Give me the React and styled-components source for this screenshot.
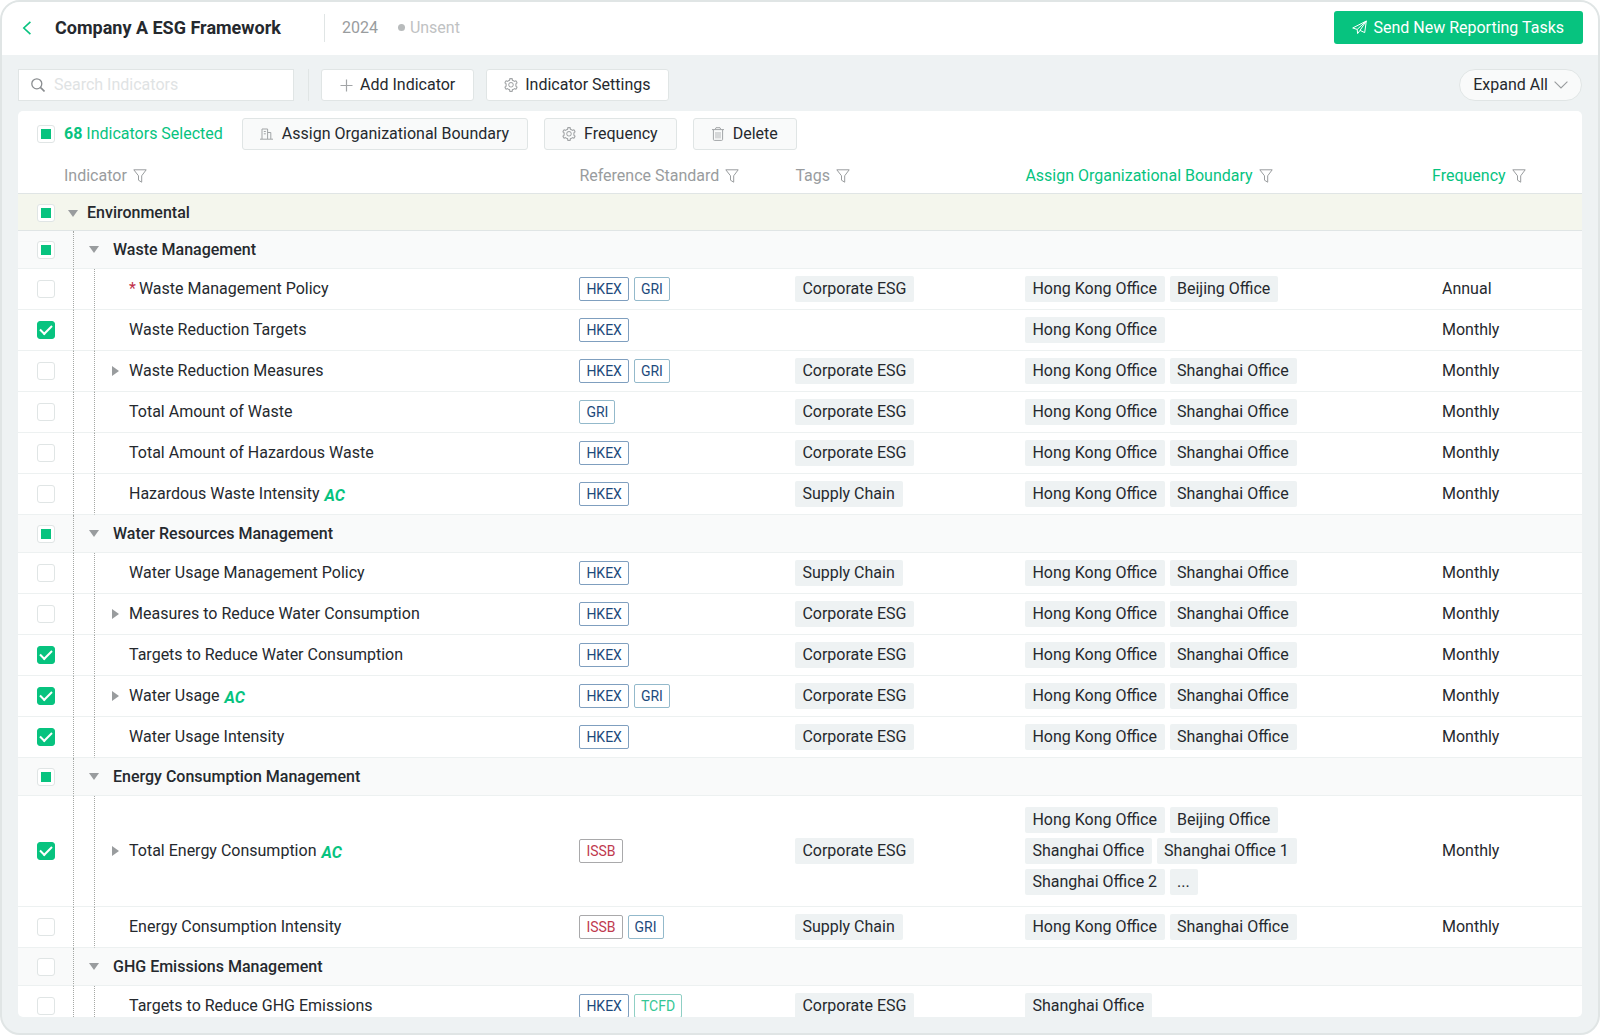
import React, { useEffect, useRef, useState } from "react";
import styled, { createGlobalStyle, css } from "styled-components";
import { AiOutlineSetting } from "react-icons/ai";

const GlobalStyle = createGlobalStyle`
  * {
    box-sizing: border-box;
  }
  body {
    margin: 0;
    background-color: #ffffff;
    color: #25292e;
    font-family: Roboto, "Liberation Sans", sans-serif;
    font-size: 16px;
    line-height: 20px;
  }
  button,
  input {
    font: inherit;
    color: inherit;
  }
`;

const Page = styled.div`
  height: 100vh;
  display: flex;
  flex-direction: column;
  overflow: hidden;
  background-color: #eef2f3;
  border: 2px solid #e0e5e5;
  border-radius: 20px;
`;

const Header = styled.header`
  display: flex;
  align-items: center;
  height: 53px;
  padding: 0 15px 2px 19px;
  background-color: #ffffff;
`;

const BackLink = styled.a`
  display: flex;
  width: 34px;
  color: #07c37f;
`;

const Title = styled.h1`
  margin: 0;
  font-size: 18px;
  font-weight: 700;
  line-height: 24px;
`;

const HeaderDivider = styled.div`
  width: 1px;
  height: 28px;
  margin: 0 17px 0 43px;
  background-color: #e0e5e5;
`;

const Year = styled.span`
  color: #999c9e;
`;

const Status = styled.span`
  display: flex;
  align-items: center;
  gap: 5px;
  margin-left: 20px;
  color: #bfc2c3;
  &::before {
    content: "";
    width: 7px;
    height: 7px;
    border-radius: 50%;
    background-color: #b8bbbc;
  }
`;

const SendButton = styled.button`
  display: flex;
  align-items: center;
  gap: 6px;
  height: 33px;
  margin-left: auto;
  padding: 0 19px 0 18px;
  border: none;
  border-radius: 3px;
  background-color: #07c37f;
  color: #ffffff;
  cursor: pointer;
`;

const Main = styled.main`
  flex: 1;
  min-height: 0;
  display: flex;
  flex-direction: column;
  padding: 14px 16px 16px;
`;

const Toolbar = styled.div`
  display: flex;
  align-items: center;
  margin-bottom: 10px;
`;

const SearchBox = styled.label`
  display: flex;
  align-items: center;
  gap: 9px;
  width: 276px;
  height: 32px;
  padding: 0 12px;
  border: 1px solid #e0e5e5;
  background-color: #ffffff;
  color: #8a8d90;
`;

const SearchInput = styled.input`
  flex: 1;
  min-width: 0;
  padding: 0;
  border: none;
  outline: none;
  background: transparent;
  color: #25292e;
  &::placeholder {
    color: #dfe3e4;
    opacity: 1;
  }
`;

const ToolbarDivider = styled.div`
  width: 1px;
  height: 32px;
  margin: 0 12px 0 14px;
  background-color: #e0e5e5;
`;

const Button = styled.button`
  display: flex;
  align-items: center;
  gap: ${(props) => (props.$soft ? "7px" : "6px")};
  height: 32px;
  margin-right: ${(props) => (props.$soft ? "16px" : "12px")};
  padding: 0 18px 0 16px;
  border: 1px solid #e0e5e5;
  border-radius: 3px;
  background-color: ${(props) => (props.$soft ? "#f9fafa" : "#ffffff")};
  white-space: nowrap;
  cursor: pointer;
`;

const ButtonIcon = styled.span`
  display: flex;
  justify-content: center;
  width: 16px;
  color: #a2a5a7;
`;

const ExpandButton = styled(Button)`
  margin: 0 0 0 auto;
  padding: 0 13px;
  border-radius: 16px;
  background-color: #f9fafa;
  svg {
    color: #999c9e;
  }
`;

const Panel = styled.section`
  flex: 1;
  min-height: 0;
  overflow: auto;
  scrollbar-width: none;
  border-radius: 5px;
  background-color: #ffffff;
`;

const SelectionBar = styled.div`
  display: flex;
  align-items: center;
  height: 46px;
  padding-left: 19px;
`;

const SelectedCount = styled.label`
  margin: 0 19px 0 9px;
  color: #07c37f;
`;

const Checkbox = styled.input`
  flex: none;
  display: grid;
  place-content: center;
  appearance: none;
  width: 18px;
  height: 18px;
  margin: 0;
  border: 1px solid #e0e5e5;
  border-radius: 3px;
  background-color: #ffffff;
  cursor: pointer;
  &:indeterminate::after {
    content: "";
    width: 10px;
    height: 10px;
    background-color: #07c37f;
  }
  &:checked {
    border-color: #07c37f;
    background-color: #07c37f;
  }
  &:checked::after {
    content: "";
    width: 10px;
    height: 5px;
    margin-bottom: 3px;
    border: solid #ffffff;
    border-width: 0 0 2px 2px;
    transform: rotate(-45deg);
  }
`;

const Table = styled.table`
  width: 100%;
  min-width: 1200px;
  table-layout: fixed;
  border-collapse: separate;
  border-spacing: 0;
`;

const HeadCell = styled.th`
  height: 37px;
  padding: 2px 0 0 ${(props) => props.$indent || 0}px;
  border-bottom: 1px solid #e0e5e5;
  color: ${(props) => (props.$active ? "#07c37f" : "#999c9e")};
  font-weight: 400;
  text-align: left;
`;

const HeadLabel = styled.div`
  display: flex;
  align-items: center;
  gap: 6px;
`;

const FilterButton = styled.button`
  display: flex;
  padding: 0;
  border: none;
  background: none;
  color: #999c9e;
  cursor: pointer;
`;

const SectionCell = styled.th`
  height: 37px;
  padding: 2px 0 0 19px;
  border-bottom: 1px solid #e0e5e5;
  background-color: #f4f6ed;
  font-weight: 500;
  text-align: left;
`;

const SectionContent = styled.div`
  display: flex;
  align-items: center;
`;

const cell = css`
  padding: 0;
  border-bottom: 1px solid #edf1f1;
  text-align: left;
`;

const Cell = styled.td`
  ${cell}
  height: 41px;
  padding-left: ${(props) => props.$indent || 0}px;
`;

const CheckCell = styled(Cell)`
  padding-left: 19px;
`;

const GuideCell = styled(Cell)`
  border-left: 1px dotted #a5a8a5;
`;

const GroupRow = styled.tr`
  background-color: #f9fafa;
  ${Cell} {
    height: 38px;
  }
`;

const GroupCell = styled.th`
  ${cell}
  height: 38px;
  padding-left: 15px;
  border-left: 1px dotted #a5a8a5;
  font-weight: 500;
`;

const Toggle = styled.button`
  display: flex;
  justify-content: center;
  flex: none;
  width: 10px;
  margin: 0 ${(props) => props.$gap}px 0 ${(props) => props.$before || 0}px;
  padding: 0;
  border: none;
  background: none;
  color: #999c9e;
  cursor: pointer;
`;

const NameContent = styled.div`
  display: flex;
  align-items: center;
  padding-left: ${(props) => (props.$expandable ? 15 : 34)}px;
`;

const Required = styled.span`
  margin-right: 3px;
  color: #c0304a;
`;

const AutoMark = styled.span`
  margin-left: 5px;
  padding-top: 4px;
  color: #07c37f;
  font-size: 16px;
  font-style: italic;
  font-weight: 700;
`;

const TagList = styled.div`
  display: flex;
  flex-wrap: wrap;
  gap: 5px;
  max-width: 280px;
  padding: ${(props) => (props.$tall ? "11px" : "0")} 0;
`;

const Tag = styled.span`
  height: 26px;
  padding: 0 8px 0 7px;
  border-radius: 2px;
  background-color: #eef2f3;
  line-height: 26px;
`;

const standardColors = {
  HKEX: { text: "#1d4a7c", border: "#7f9fbf" },
  GRI: { text: "#1d4a7c", border: "#93b9cb" },
  ISSB: { text: "#c03a4e", border: "#a9a9ab" },
  TCFD: { text: "#35c796", border: "#8fcfc4" },
};

const Standard = styled.span`
  height: 24px;
  padding: 0 6px;
  border: 1px solid ${(props) => standardColors[props.$name].border};
  border-radius: 2px;
  color: ${(props) => standardColors[props.$name].text};
  font-size: 14px;
  line-height: 22px;
`;

const FilterIcon = () => (
  <svg width="14" height="14" viewBox="0 0 14 14" fill="none" stroke="currentColor">
    <path d="M0.8 0.8H13.2L8.7 6.8V13.2L5.5 11.2V6.8Z" strokeLinejoin="round" />
  </svg>
);

const BackIcon = () => (
  <svg width="12" height="14" viewBox="0 0 12 14" fill="none" stroke="currentColor" strokeWidth="1.6">
    <path d="M9.4 0.8L2.8 7L9.4 13.2" />
  </svg>
);

const SearchIcon = () => (
  <svg width="14" height="14" viewBox="0 0 14 14" fill="none" stroke="currentColor" strokeWidth="1.3">
    <circle cx="5.8" cy="5.8" r="5" />
    <path d="M9.4 9.4L13.5 13.5" strokeWidth="1.6" />
  </svg>
);

const PlusIcon = () => (
  <svg width="13" height="13" viewBox="0 0 13 13" fill="none" stroke="currentColor" strokeWidth="1.2">
    <path d="M6.5 0.5V12.5M0.5 6.5H12.5" />
  </svg>
);

const SendIcon = () => (
  <svg width="15" height="15" viewBox="0 0 15 15" fill="none" stroke="currentColor" strokeLinejoin="round">
    <path d="M0.7 8L14.3 1L12.7 12.6L8 10.4L5.6 13.6L5.2 9.4Z" />
    <path d="M5.2 9.4L14.3 1L8 10.4" />
  </svg>
);

const BuildingIcon = () => (
  <svg width="13" height="12" viewBox="0 0 13 12" fill="none" stroke="currentColor">
    <path d="M0 11.2H13M2 11V1H7.6V11M7.6 4.5H10.8V11" />
    <path d="M3.8 3.5H5.8M3.8 5.8H5.8" />
  </svg>
);

const TrashIcon = () => (
  <svg width="12" height="14" viewBox="0 0 12 14" fill="none" stroke="currentColor">
    <path d="M0 2.6H12M3.2 2.4L4 0.7H8L8.8 2.4M1.4 2.8V12.4Q1.4 13.4 2.4 13.4H9.6Q10.6 13.4 10.6 12.4V2.8" />
    <path d="M4 5V11.4M6 5V11.4M8 5V11.4" strokeWidth="0.8" />
  </svg>
);

const ChevronIcon = () => (
  <svg width="14" height="8" viewBox="0 0 14 8" fill="none" stroke="currentColor" strokeWidth="1.1">
    <path d="M0.6 0.6L7 7L13.4 0.6" />
  </svg>
);

const DownIcon = () => (
  <svg width="10" height="7" viewBox="0 0 10 7" fill="currentColor">
    <path d="M0 0H10L5 7Z" />
  </svg>
);

const RightIcon = () => (
  <svg width="7" height="10" viewBox="0 0 7 10" fill="currentColor">
    <path d="M0 0L7 5L0 10Z" />
  </svg>
);

const HK = "Hong Kong Office";
const SH = "Shanghai Office";
const BJ = "Beijing Office";

const groups = [
  {
    name: "Waste Management",
    state: "some",
    rows: [
      { name: "Waste Management Policy", required: true, standards: ["HKEX", "GRI"], tag: "Corporate ESG", offices: [HK, BJ], frequency: "Annual" },
      { name: "Waste Reduction Targets", checked: true, standards: ["HKEX"], offices: [HK], frequency: "Monthly" },
      { name: "Waste Reduction Measures", expandable: true, standards: ["HKEX", "GRI"], tag: "Corporate ESG", offices: [HK, SH], frequency: "Monthly" },
      { name: "Total Amount of Waste", standards: ["GRI"], tag: "Corporate ESG", offices: [HK, SH], frequency: "Monthly" },
      { name: "Total Amount of Hazardous Waste", standards: ["HKEX"], tag: "Corporate ESG", offices: [HK, SH], frequency: "Monthly" },
      { name: "Hazardous Waste Intensity", auto: true, standards: ["HKEX"], tag: "Supply Chain", offices: [HK, SH], frequency: "Monthly" },
    ],
  },
  {
    name: "Water Resources Management",
    state: "some",
    rows: [
      { name: "Water Usage Management Policy", standards: ["HKEX"], tag: "Supply Chain", offices: [HK, SH], frequency: "Monthly" },
      { name: "Measures to Reduce Water Consumption", expandable: true, standards: ["HKEX"], tag: "Corporate ESG", offices: [HK, SH], frequency: "Monthly" },
      { name: "Targets to Reduce Water Consumption", checked: true, standards: ["HKEX"], tag: "Corporate ESG", offices: [HK, SH], frequency: "Monthly" },
      { name: "Water Usage", auto: true, expandable: true, checked: true, standards: ["HKEX", "GRI"], tag: "Corporate ESG", offices: [HK, SH], frequency: "Monthly" },
      { name: "Water Usage Intensity", checked: true, standards: ["HKEX"], tag: "Corporate ESG", offices: [HK, SH], frequency: "Monthly" },
    ],
  },
  {
    name: "Energy Consumption Management",
    state: "some",
    rows: [
      { name: "Total Energy Consumption", auto: true, expandable: true, checked: true, standards: ["ISSB"], tag: "Corporate ESG", offices: [HK, BJ, SH, "Shanghai Office 1", "Shanghai Office 2", "..."], frequency: "Monthly" },
      { name: "Energy Consumption Intensity", standards: ["ISSB", "GRI"], tag: "Supply Chain", offices: [HK, SH], frequency: "Monthly" },
    ],
  },
  {
    name: "GHG Emissions Management",
    state: "none",
    rows: [
      { name: "Targets to Reduce GHG Emissions", standards: ["HKEX", "TCFD"], tag: "Corporate ESG", offices: [SH], frequency: "" },
    ],
  },
];

const Check = ({ state, ...rest }) => {
  const ref = useRef(null);
  const [checked, setChecked] = useState(state === "all");

  useEffect(() => {
    ref.current.indeterminate = state === "some";
  }, [state]);

  return (
    <Checkbox
      ref={ref}
      type="checkbox"
      checked={checked}
      onChange={(e) => setChecked(e.target.checked)}
      {...rest}
    />
  );
};

const ColumnHead = ({ label, ...rest }) => (
  <HeadCell scope="col" {...rest}>
    <HeadLabel>
      {label}
      <FilterButton type="button" aria-label={`Filter ${label}`}>
        <FilterIcon />
      </FilterButton>
    </HeadLabel>
  </HeadCell>
);

const IndicatorRow = ({ row }) => (
  <tr>
    <CheckCell>
      <Check state={row.checked ? "all" : "none"} aria-label={row.name} />
    </CheckCell>
    <GuideCell />
    <GuideCell>
      <NameContent $expandable={row.expandable}>
        {row.expandable && (
          <Toggle type="button" $gap={9} aria-label={`Expand ${row.name}`}>
            <RightIcon />
          </Toggle>
        )}
        {row.required && <Required>*</Required>}
        {row.name}
        {row.auto && <AutoMark>AC</AutoMark>}
      </NameContent>
    </GuideCell>
    <Cell>
      <TagList>
        {row.standards.map((name) => (
          <Standard key={name} $name={name}>
            {name}
          </Standard>
        ))}
      </TagList>
    </Cell>
    <Cell>
      <TagList>{row.tag && <Tag>{row.tag}</Tag>}</TagList>
    </Cell>
    <Cell>
      <TagList $tall={row.offices.length > 2}>
        {row.offices.map((office) => (
          <Tag key={office}>{office}</Tag>
        ))}
      </TagList>
    </Cell>
    <Cell $indent={10}>{row.frequency}</Cell>
  </tr>
);

const App = () => {
  return (
    <>
      <GlobalStyle />
      <Page>
        <Header>
          <BackLink href="#" aria-label="Back">
            <BackIcon />
          </BackLink>
          <Title>Company A ESG Framework</Title>
          <HeaderDivider />
          <Year>2024</Year>
          <Status>Unsent</Status>
          <SendButton type="button">
            <SendIcon />
            Send New Reporting Tasks
          </SendButton>
        </Header>
        <Main>
          <Toolbar>
            <SearchBox>
              <SearchIcon />
              <SearchInput type="text" placeholder="Search Indicators" aria-label="Search Indicators" />
            </SearchBox>
            <ToolbarDivider />
            <Button type="button">
              <ButtonIcon>
                <PlusIcon />
              </ButtonIcon>
              Add Indicator
            </Button>
            <Button type="button">
              <ButtonIcon>
                <AiOutlineSetting size={16} />
              </ButtonIcon>
              Indicator Settings
            </Button>
            <ExpandButton type="button">
              Expand All
              <ChevronIcon />
            </ExpandButton>
          </Toolbar>
          <Panel>
            <SelectionBar>
              <Check state="some" id="select-all" />
              <SelectedCount htmlFor="select-all">
                <b>68</b> Indicators Selected
              </SelectedCount>
              <Button type="button" $soft>
                <ButtonIcon>
                  <BuildingIcon />
                </ButtonIcon>
                Assign Organizational Boundary
              </Button>
              <Button type="button" $soft>
                <ButtonIcon>
                  <AiOutlineSetting size={16} />
                </ButtonIcon>
                Frequency
              </Button>
              <Button type="button" $soft>
                <ButtonIcon>
                  <TrashIcon />
                </ButtonIcon>
                Delete
              </Button>
            </SelectionBar>
            <Table>
              <colgroup>
                <col width="55" />
                <col width="21" />
                <col />
                <col width="216" />
                <col width="230" />
                <col width="26%" />
                <col width="150" />
              </colgroup>
              <thead>
                <tr>
                  <ColumnHead label="Indicator" colSpan={3} $indent={46} />
                  <ColumnHead label="Reference Standard" />
                  <ColumnHead label="Tags" />
                  <ColumnHead label="Assign Organizational Boundary" $active />
                  <ColumnHead label="Frequency" $active />
                </tr>
              </thead>
              <tbody>
                <tr>
                  <SectionCell colSpan={7} scope="rowgroup">
                    <SectionContent>
                      <Check state="some" aria-label="Environmental" />
                      <Toggle type="button" $before={13} $gap={9} aria-label="Collapse Environmental">
                        <DownIcon />
                      </Toggle>
                      Environmental
                    </SectionContent>
                  </SectionCell>
                </tr>
              </tbody>
              {groups.map((group) => (
                <tbody key={group.name}>
                  <GroupRow>
                    <CheckCell>
                      <Check state={group.state} aria-label={group.name} />
                    </CheckCell>
                    <GroupCell colSpan={6} scope="rowgroup">
                      <SectionContent>
                        <Toggle type="button" $gap={14} aria-label={`Collapse ${group.name}`}>
                          <DownIcon />
                        </Toggle>
                        {group.name}
                      </SectionContent>
                    </GroupCell>
                  </GroupRow>
                  {group.rows.map((row) => (
                    <IndicatorRow key={row.name} row={row} />
                  ))}
                </tbody>
              ))}
            </Table>
          </Panel>
        </Main>
      </Page>
    </>
  );
};

export default App;
